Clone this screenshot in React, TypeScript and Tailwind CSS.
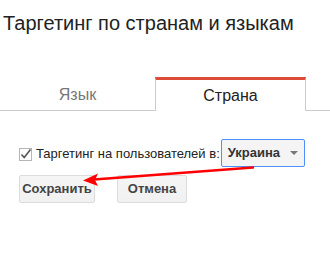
export default function App() {
  return (
    <div className="relative w-[330px] h-[257px] bg-white overflow-hidden font-['Liberation_Sans',Arial,sans-serif]">
      {/* Title */}
      <div className="pl-[3px] pt-[11px] h-[77px] text-[20px] leading-[24px] text-[#222]">
        Таргетинг по странам и языкам
      </div>

      {/* Tabs */}
      <div className="flex h-[34px]">
        <div className="w-[155px] border-b border-[#ccc] flex items-center justify-center text-[16px] text-[#777] pt-[2px]">
          Язык
        </div>
        <div className="w-[151px] border-t-[3px] border-t-[#dd4b39] border-x border-x-[#ccc] flex items-center justify-center text-[16px] text-[#222]">
          Страна
        </div>
        <div className="flex-1 border-b border-[#ccc]" />
      </div>

      {/* Form */}
      <div className="pl-[19px] pt-[28px]">
        <div className="flex items-center h-[28px]">
          <svg width="13" height="13" viewBox="0 0 13 13" className="mr-[4px] mt-[2px]">
            <rect x="0.5" y="0.5" width="12" height="12" fill="#fff" stroke="#b5b5b5" />
            <path d="M2.5 6.5 L5.2 9.5 L11.5 1.5" fill="none" stroke="#555" strokeWidth="1.6" />
          </svg>
          <span className="text-[13px] text-[#222] mt-[1px]">Таргетинг на пользователей в:</span>
          <div className="ml-[1px] w-[84px] h-[28px] border border-[#4d90fe] rounded-[2px] bg-[#f4f4f4] flex items-center justify-between pl-[6px] pr-[6px]">
            <span className="text-[13px] font-bold text-[#333]">Украина</span>
            <svg width="8" height="4" viewBox="0 0 8 4">
              <path d="M0 0 L8 0 L4 4 Z" fill="#777" />
            </svg>
          </div>
        </div>
        <div className="flex gap-[22px] mt-[8px]">
          <button className="w-[76px] h-[28px] border border-[#dcdcdc] rounded-[2px] bg-gradient-to-b from-[#f5f5f5] to-[#f1f1f1] text-[13px] font-bold text-[#444]">
            Сохранить
          </button>
          <button className="w-[70px] h-[28px] border border-[#dcdcdc] rounded-[2px] bg-gradient-to-b from-[#f5f5f5] to-[#f1f1f1] text-[13px] font-bold text-[#444]">
            Отмена
          </button>
        </div>
      </div>

      {/* Red annotation arrow */}
      <svg className="absolute left-0 top-0 pointer-events-none" width="330" height="257" viewBox="0 0 330 257">
        <line x1="253" y1="167.5" x2="94" y2="179.5" stroke="#f00" strokeWidth="2.5" strokeLinecap="round" />
        <path d="M83 180.5 L98 173.5 L95 180 L98 186 Z" fill="#f00" />
      </svg>
    </div>
  )
}
